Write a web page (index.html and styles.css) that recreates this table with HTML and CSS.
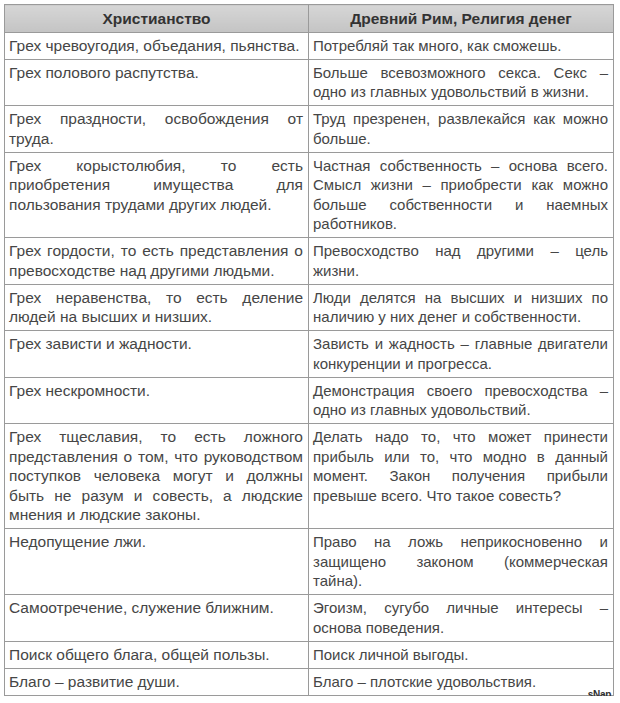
FILE: index.html
```html
<!DOCTYPE html>
<html lang="ru">
<head>
<meta charset="utf-8">
<title>Христианство и Религия денег</title>
<link rel="stylesheet" href="styles.css">
</head>
<body>
<div class="sheet">
<table class="compare">
  <colgroup><col class="col-left"><col class="col-right"></colgroup>
  <thead>
    <tr><th>Христианство</th><th>Древний Рим, Религия денег</th></tr>
  </thead>
  <tbody>
    <tr><td>Грех чревоугодия, объедания, пьянства.</td><td>Потребляй так много, как сможешь.</td></tr>
    <tr><td>Грех полового распутства.</td><td>Больше всевозможного секса. Секс – одно из главных удовольствий в жизни.</td></tr>
    <tr><td>Грех праздности, освобождения от труда.</td><td>Труд презренен, развлекайся как можно больше.</td></tr>
    <tr><td>Грех корыстолюбия, то есть приобретения имущества для пользования трудами других людей.</td><td>Частная собственность – основа всего. Смысл жизни – приобрести как можно больше собственности и наемных работников.</td></tr>
    <tr><td>Грех гордости, то есть представления о превосходстве над другими людьми.</td><td>Превосходство над другими – цель жизни.</td></tr>
    <tr><td>Грех неравенства, то есть деление людей на высших и низших.</td><td>Люди делятся на высших и низших по наличию у них денег и собственности.</td></tr>
    <tr><td>Грех зависти и жадности.</td><td>Зависть и жадность – главные двигатели конкуренции и прогресса.</td></tr>
    <tr><td>Грех нескромности.</td><td>Демонстрация своего превосходства – одно из главных удовольствий.</td></tr>
    <tr><td>Грех тщеславия, то есть ложного представления о том, что руководством поступков человека могут и должны быть не разум и совесть, а людские мнения и людские законы.</td><td>Делать надо то, что может принести прибыль или то, что модно в данный момент. Закон получения прибыли превыше всего. Что такое совесть?</td></tr>
    <tr><td>Недопущение лжи.</td><td>Право на ложь неприкосновенно и защищено законом (коммерческая тайна).</td></tr>
    <tr><td>Самоотречение, служение ближним.</td><td>Эгоизм, сугубо личные интересы – основа поведения.</td></tr>
    <tr><td>Поиск общего блага, общей пользы.</td><td>Поиск личной выгоды.</td></tr>
    <tr><td>Благо – развитие души.</td><td>Благо – плотские удовольствия.</td></tr>
  </tbody>
</table>
<span class="watermark">sNap</span>
</div>
</body>
</html>
```
FILE: styles.css
```css
html, body {
  margin: 0;
  padding: 0;
  background: #ffffff;
}
body {
  padding: 4px 0 0 4px;
  font-family: "Liberation Sans", Arial, sans-serif;
  color: #464646;
}
.sheet {
  position: relative;
  width: 610px;
}
.compare {
  width: 609px;
  border-collapse: collapse;
  table-layout: fixed;
  font-size: 15.5px;
  line-height: 19.5px;
}
.col-left { width: 304px; }
.col-right { width: 305px; }
.compare th, .compare td {
  border: 1px solid #9a9a9a;
}
.compare th {
  background: linear-gradient(#d6d6d6, #c4c4c4);
  font-weight: bold;
  text-align: center;
  padding: 4px 4px 3px;
  color: #333333;
}
.compare td {
  vertical-align: top;
  text-align: justify;
  padding: 3px 5px 3.5px 4px;
}
.compare td:last-child {
  font-size: 15px;
}
.watermark {
  position: absolute;
  right: 3px;
  bottom: -4px;
  font-size: 10px;
  line-height: 10px;
  font-weight: bold;
  color: #2e2e2e;
  letter-spacing: -0.3px;
}
```
